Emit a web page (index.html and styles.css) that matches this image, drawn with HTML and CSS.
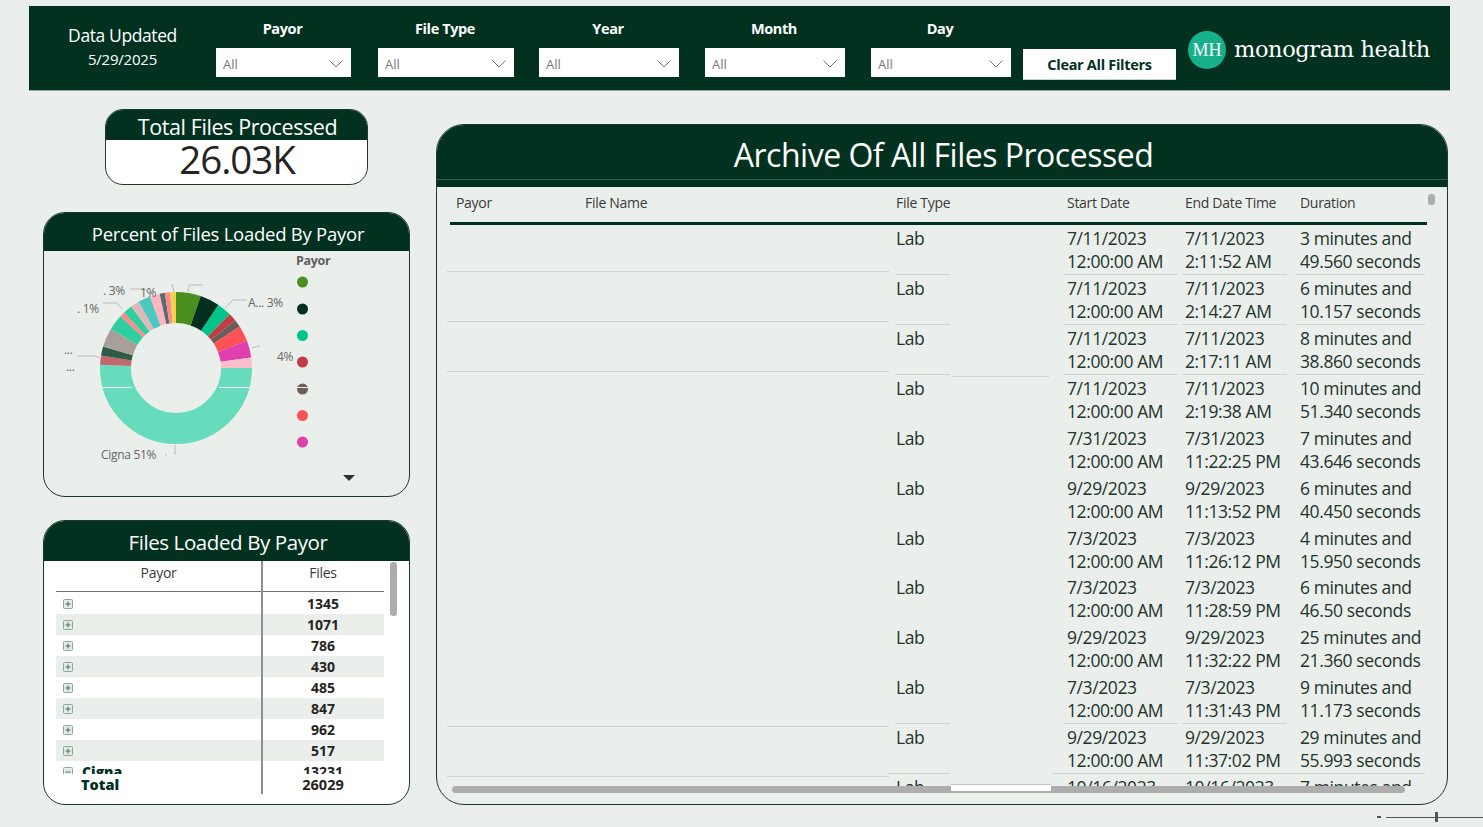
FILE: index.html
```html
<!DOCTYPE html>
<html lang="en">
<head>
<meta charset="UTF-8" />
<meta name="viewport" content="width=device-width, initial-scale=1" />
<title>Archive Of All Files Processed</title>
<link rel="stylesheet" href="styles.css">
</head>
<body>

<svg class="defs" xmlns="http://www.w3.org/2000/svg">
  <symbol id="chev" viewBox="0 0 14 8">
    <polyline points="0.5,0.5 7,7 13.5,0.5" fill="none" stroke="#777" stroke-width="1"/>
  </symbol>
  <symbol id="plus" viewBox="0 0 10 10">
    <rect x="0.5" y="0.5" width="9" height="9" rx="1" fill="#e4ebe7" stroke="#8fa79b"/>
    <path d="M2.5 5h5M5 2.5v5" stroke="#4d6a5c"/>
  </symbol>
  <symbol id="minus" viewBox="0 0 10 10">
    <rect x="0.5" y="0.5" width="9" height="9" rx="1" fill="#e4ebe7" stroke="#8fa79b"/>
    <path d="M2.5 5h5" stroke="#4d6a5c"/>
  </symbol>
</svg>

<!-- Top filter bar -->
<header class="filter-bar">
  <div class="updated">
    <div class="updated-label">Data Updated</div>
    <div class="updated-date">5/29/2025</div>
  </div>
  <div class="slicer slicer-payor">
    <div class="slicer-label">Payor</div>
    <div class="slicer-box">All <svg class="chev"><use href="#chev"/></svg></div>
  </div>
  <div class="slicer slicer-type">
    <div class="slicer-label">File Type</div>
    <div class="slicer-box">All <svg class="chev"><use href="#chev"/></svg></div>
  </div>
  <div class="slicer slicer-wide">
    <div class="slicer-label">Year</div>
    <div class="slicer-box">All <svg class="chev"><use href="#chev"/></svg></div>
  </div>
  <div class="slicer slicer-wide">
    <div class="slicer-label">Month</div>
    <div class="slicer-box">All <svg class="chev"><use href="#chev"/></svg></div>
  </div>
  <div class="slicer slicer-day">
    <div class="slicer-label">Day</div>
    <div class="slicer-box">All <svg class="chev"><use href="#chev"/></svg></div>
  </div>
  <button class="clear-btn">Clear All Filters</button>
  <div class="logo">
    <div class="logo-mark">MH</div>
    <div class="logo-text">monogram health</div>
  </div>
</header>

<main class="dashboard">
  <div class="left-col">

    <section class="card total-card">
      <h2 class="total-title">Total Files Processed</h2>
      <div class="total-value">26.03K</div>
    </section>

    <section class="card pie-card">
      <h2 class="card-title">Percent of Files Loaded By Payor</h2>
      <svg class="pie" viewBox="44 251 365 245" xmlns="http://www.w3.org/2000/svg">
        <g fill="none" stroke-width="31" transform="rotate(-90 176 368)">
          <circle cx="176" cy="368" r="60.5" pathLength="360" stroke="#4a8f1e" stroke-dasharray="19 360"/>
          <circle cx="176" cy="368" r="60.5" pathLength="360" stroke="#04301f" stroke-dasharray="15 360" stroke-dashoffset="-19"/>
          <circle cx="176" cy="368" r="60.5" pathLength="360" stroke="#00c58a" stroke-dasharray="11 360" stroke-dashoffset="-34"/>
          <circle cx="176" cy="368" r="60.5" pathLength="360" stroke="#c23b45" stroke-dasharray="6 360" stroke-dashoffset="-45"/>
          <circle cx="176" cy="368" r="60.5" pathLength="360" stroke="#6b5f58" stroke-dasharray="6 360" stroke-dashoffset="-51"/>
          <circle cx="176" cy="368" r="60.5" pathLength="360" stroke="#ff5257" stroke-dasharray="12 360" stroke-dashoffset="-57"/>
          <circle cx="176" cy="368" r="60.5" pathLength="360" stroke="#e03fad" stroke-dasharray="13 360" stroke-dashoffset="-69"/>
          <circle cx="176" cy="368" r="60.5" pathLength="360" stroke="#ffc0cb" stroke-dasharray="8 360" stroke-dashoffset="-82"/>
          <circle cx="176" cy="368" r="60.5" pathLength="360" stroke="#66dcbc" stroke-dasharray="182.5 360" stroke-dashoffset="-90"/>
          <circle cx="176" cy="368" r="60.5" pathLength="360" stroke="#c0686e" stroke-dasharray="7 360" stroke-dashoffset="-272.5"/>
          <circle cx="176" cy="368" r="60.5" pathLength="360" stroke="#2f5b48" stroke-dasharray="7 360" stroke-dashoffset="-279.5"/>
          <circle cx="176" cy="368" r="60.5" pathLength="360" stroke="#a89f9a" stroke-dasharray="14.5 360" stroke-dashoffset="-286.5"/>
          <circle cx="176" cy="368" r="60.5" pathLength="360" stroke="#2fce9f" stroke-dasharray="12 360" stroke-dashoffset="-301"/>
          <circle cx="176" cy="368" r="60.5" pathLength="360" stroke="#ff8a8a" stroke-dasharray="4 360" stroke-dashoffset="-313"/>
          <circle cx="176" cy="368" r="60.5" pathLength="360" stroke="#2fce9f" stroke-dasharray="7 360" stroke-dashoffset="-317"/>
          <circle cx="176" cy="368" r="60.5" pathLength="360" stroke="#e0b8ba" stroke-dasharray="6.5 360" stroke-dashoffset="-324"/>
          <circle cx="176" cy="368" r="60.5" pathLength="360" stroke="#4dc8c0" stroke-dasharray="9.5 360" stroke-dashoffset="-330.5"/>
          <circle cx="176" cy="368" r="60.5" pathLength="360" stroke="#ffb5c0" stroke-dasharray="7.5 360" stroke-dashoffset="-340"/>
          <circle cx="176" cy="368" r="60.5" pathLength="360" stroke="#5c6b70" stroke-dasharray="4 360" stroke-dashoffset="-347.5"/>
          <circle cx="176" cy="368" r="60.5" pathLength="360" stroke="#ff8a8a" stroke-dasharray="4 360" stroke-dashoffset="-351.5"/>
          <circle cx="176" cy="368" r="60.5" pathLength="360" stroke="#f5d04e" stroke-dasharray="4.5 360" stroke-dashoffset="-355.5"/>
        </g>
        <path d="M102 387.5h30M219 387.5h31" stroke="#fff" stroke-width="1"/>

        <g class="leader">
          <path d="M188 292l1-7h14"/>
          <path d="M225 308l8-8h14"/>
          <path d="M252 348l6-2h2"/>
          <path d="M174 292l-2-8"/>
          <path d="M122 309l-5-6h-14"/>
          <path d="M148 292l-4-3h-14"/>
          <path d="M100 358l-5-2h-17"/>
          <path d="M175 445v10M165 455h2"/>
        </g>
        <g class="pie-label">
          <text x="103" y="295">. 3%</text>
          <text x="140" y="297">1%</text>
          <text x="77" y="313">. 1%</text>
          <text x="248" y="307">A... 3%</text>
          <text x="277" y="361">4%</text>
          <text x="64" y="354">...</text>
          <text x="66" y="371">...</text>
          <text x="101" y="459">Cigna 51%</text>
        </g>

        <text class="legend-title" x="296" y="265">Payor</text>
        <circle cx="302.5" cy="282" r="5.5" fill="#4a8f1e"/>
        <circle cx="302.5" cy="309" r="5.5" fill="#04301f"/>
        <circle cx="302.5" cy="335.5" r="5.5" fill="#00c58a"/>
        <circle cx="302.5" cy="362" r="5.5" fill="#c23b45"/>
        <circle cx="302.5" cy="389" r="5.5" fill="#6b5f58"/>
        <path d="M296 387.5h13" stroke="#ebefec" stroke-width="1"/>
        <circle cx="302.5" cy="415.5" r="5.5" fill="#ff5257"/>
        <circle cx="302.5" cy="442" r="5.5" fill="#e03fad"/>
        <polygon points="343,475 355,475 349,481" fill="#333"/>
      </svg>
    </section>

    <section class="card payor-card">
      <h2 class="card-title">Files Loaded By Payor</h2>
      <div class="payor-body">
        <div class="payor-head">
          <div class="payor-name-col">Payor</div>
          <div class="payor-num-col">Files</div>
        </div>
        <div class="payor-rows">
          <div class="payor-row"><div class="payor-name-col"><svg class="expander"><use href="#plus"/></svg></div><div class="payor-num-col">1345</div></div>
          <div class="payor-row"><div class="payor-name-col"><svg class="expander"><use href="#plus"/></svg></div><div class="payor-num-col">1071</div></div>
          <div class="payor-row"><div class="payor-name-col"><svg class="expander"><use href="#plus"/></svg></div><div class="payor-num-col">786</div></div>
          <div class="payor-row"><div class="payor-name-col"><svg class="expander"><use href="#plus"/></svg></div><div class="payor-num-col">430</div></div>
          <div class="payor-row"><div class="payor-name-col"><svg class="expander"><use href="#plus"/></svg></div><div class="payor-num-col">485</div></div>
          <div class="payor-row"><div class="payor-name-col"><svg class="expander"><use href="#plus"/></svg></div><div class="payor-num-col">847</div></div>
          <div class="payor-row"><div class="payor-name-col"><svg class="expander"><use href="#plus"/></svg></div><div class="payor-num-col">962</div></div>
          <div class="payor-row"><div class="payor-name-col"><svg class="expander"><use href="#plus"/></svg></div><div class="payor-num-col">517</div></div>
          <div class="payor-row payor-open"><div class="payor-name-col"><svg class="expander"><use href="#minus"/></svg><b>Cigna</b></div><div class="payor-num-col">13231</div></div>
        </div>
        <div class="payor-total">
          <div class="payor-name-col"><b>Total</b></div>
          <div class="payor-num-col">26029</div>
        </div>
        <div class="payor-thumb"></div>
      </div>
    </section>
  </div>

  <!-- Archive table -->
  <section class="card archive-card">
    <h1 class="archive-title">Archive Of All Files Processed</h1>
    <div class="archive-body">
      <div class="archive-head">
        <div>Payor</div>
        <div>File Name</div>
        <div>File Type</div>
        <div>Start Date</div>
        <div>End Date Time</div>
        <div>Duration</div>
      </div>
      <div class="archive-rows">
        <div class="arow"><div class="acell"><hr class="rule rule-left"></div><div class="acell">Lab<hr class="rule rule-type"></div><div class="acell">7/11/2023<br>12:00:00 AM<hr class="rule rule-start"></div><div class="acell">7/11/2023<br>2:11:52 AM<hr class="rule rule-end"></div><div class="acell">3 minutes and<br>49.560 seconds<hr class="rule rule-dur"></div></div>
        <div class="arow"><div class="acell"><hr class="rule rule-left"></div><div class="acell">Lab<hr class="rule rule-type"></div><div class="acell">7/11/2023<br>12:00:00 AM<hr class="rule rule-start"></div><div class="acell">7/11/2023<br>2:14:27 AM<hr class="rule rule-end"></div><div class="acell">6 minutes and<br>10.157 seconds<hr class="rule rule-dur"></div></div>
        <div class="arow"><div class="acell"><hr class="rule rule-left"></div><div class="acell">Lab<hr class="rule rule-type-long"></div><div class="acell">7/11/2023<br>12:00:00 AM<hr class="rule rule-start"></div><div class="acell">7/11/2023<br>2:17:11 AM<hr class="rule rule-end"></div><div class="acell">8 minutes and<br>38.860 seconds<hr class="rule rule-dur"></div></div>
        <div class="arow"><div class="acell"></div><div class="acell">Lab</div><div class="acell">7/11/2023<br>12:00:00 AM</div><div class="acell">7/11/2023<br>2:19:38 AM</div><div class="acell">10 minutes and<br>51.340 seconds</div></div>
        <div class="arow"><div class="acell"></div><div class="acell">Lab</div><div class="acell">7/31/2023<br>12:00:00 AM</div><div class="acell">7/31/2023<br>11:22:25 PM</div><div class="acell">7 minutes and<br>43.646 seconds</div></div>
        <div class="arow"><div class="acell"></div><div class="acell">Lab</div><div class="acell">9/29/2023<br>12:00:00 AM</div><div class="acell">9/29/2023<br>11:13:52 PM</div><div class="acell">6 minutes and<br>40.450 seconds</div></div>
        <div class="arow"><div class="acell"></div><div class="acell">Lab</div><div class="acell">7/3/2023<br>12:00:00 AM</div><div class="acell">7/3/2023<br>11:26:12 PM</div><div class="acell">4 minutes and<br>15.950 seconds</div></div>
        <div class="arow"><div class="acell"></div><div class="acell">Lab</div><div class="acell">7/3/2023<br>12:00:00 AM</div><div class="acell">7/3/2023<br>11:28:59 PM</div><div class="acell">6 minutes and<br>46.50 seconds</div></div>
        <div class="arow"><div class="acell"></div><div class="acell">Lab</div><div class="acell">9/29/2023<br>12:00:00 AM</div><div class="acell">9/29/2023<br>11:32:22 PM</div><div class="acell">25 minutes and<br>21.360 seconds</div></div>
        <div class="arow"><div class="acell"><hr class="rule rule-left-low"></div><div class="acell">Lab<hr class="rule rule-type"></div><div class="acell">7/3/2023<br>12:00:00 AM<hr class="rule rule-start"></div><div class="acell">7/3/2023<br>11:31:43 PM<hr class="rule rule-end"></div><div class="acell">9 minutes and<br>11.173 seconds</div></div>
        <div class="arow"><div class="acell"><hr class="rule rule-left-low"></div><div class="acell">Lab<hr class="rule rule-type-wide"></div><div class="acell">9/29/2023<br>12:00:00 AM<hr class="rule rule-start-wide"></div><div class="acell">9/29/2023<br>11:37:02 PM<hr class="rule rule-end-wide"></div><div class="acell">29 minutes and<br>55.993 seconds<hr class="rule rule-dur"></div></div>
        <div class="arow"><div class="acell"></div><div class="acell">Lab</div><div class="acell">10/16/2023</div><div class="acell">10/16/2023</div><div class="acell">7 minutes and</div></div>
      </div>
      <div class="hscroll"></div>
      <div class="hscroll-gap"></div>
      <div class="vscroll"></div>
    </div>
  </section>
</main>

<footer class="zoom-bar">
  <span class="zoom-minus"></span>
  <span class="zoom-track"><span class="zoom-thumb"></span></span>
</footer>

</body>
</html>
```

FILE: styles.css
```css
/* General styling */
* {
  box-sizing: border-box;
}

html, body {
  height: 827px;
  overflow: hidden;
}

body {
  margin: 0;
  padding: 6px 33px 0 29px;
  background: #ebefec;
  color: #22342b;
  font-family: "Open Sans", "Noto Sans", sans-serif;
}

.defs {
  display: none;
}

/* Filter bar */
.filter-bar {
  display: flex;
  align-items: flex-start;
  height: 85px;
  background: #02311f;
  border-bottom: 1px solid #9aa8a1;
  color: #fff;
}

.updated {
  width: 187px;
  padding-top: 18px;
  text-align: center;
}

.updated-label {
  font-size: 17.5px;
  letter-spacing: -0.4px;
  line-height: 22px;
}

.updated-date {
  margin-top: 3px;
  font-size: 15px;
  letter-spacing: -0.2px;
  line-height: 20px;
}

.slicer {
  padding-top: 13px;
}

.slicer-payor { width: 135px; margin-right: 27px; }
.slicer-type { width: 136px; margin-right: 25px; }
.slicer-wide { width: 140px; margin-right: 26px; }
.slicer-day { width: 140px; margin-right: 12px; }

.slicer-label {
  height: 29px;
  padding-right: 2px;
  font-size: 14.5px;
  font-weight: 700;
  letter-spacing: -0.4px;
  line-height: 20px;
  text-align: center;
}

.slicer-box {
  display: flex;
  align-items: flex-end;
  justify-content: space-between;
  height: 29px;
  padding: 0 8px 4px 7px;
  background: #fff;
  color: #777;
  font-size: 13px;
  line-height: 18px;
}

.chev {
  width: 14px;
  height: 8px;
  margin-bottom: 5px;
}

.clear-btn {
  width: 153px;
  height: 31px;
  margin-top: 43px;
  padding: 0;
  background: #fff;
  border: none;
  border-bottom: 1px solid #c9cfcc;
  color: #02311f;
  font-family: inherit;
  font-size: 14.5px;
  font-weight: 700;
  letter-spacing: -0.3px;
}

.logo {
  display: flex;
  align-items: center;
  margin: 25px 0 0 12px;
}

.logo-mark {
  width: 38px;
  height: 38px;
  border-radius: 50%;
  background: #16b18a;
  color: #fff;
  font-family: "Liberation Serif", serif;
  font-size: 18px;
  line-height: 38px;
  text-align: center;
}

.logo-text {
  margin: -3px 0 0 8px;
  font-family: "DejaVu Serif", serif;
  font-size: 22.5px;
  letter-spacing: -0.4px;
  white-space: nowrap;
}

/* Cards */
.dashboard {
  display: flex;
  align-items: flex-start;
  margin-top: 18px;
}

.left-col {
  display: flex;
  flex-direction: column;
  width: 367px;
  margin: 0 26px 0 14px;
}

.card {
  overflow: hidden;
  border: 1px solid #1c3a2c;
}

.card-title,
.total-title,
.archive-title {
  margin: 0;
  background: #02311f;
  color: #fff;
  font-weight: 400;
  text-align: center;
}

.card-title {
  height: 38px;
  padding-left: 3px;
  font-size: 18.5px;
  letter-spacing: -0.25px;
  line-height: 41px;
}

.total-card {
  width: 263px;
  height: 76px;
  margin-left: 62px;
  border-radius: 18px;
  background: #fff;
}

.total-title {
  height: 30px;
  padding: 3px 0 0 2px;
  font-size: 21.5px;
  letter-spacing: -0.4px;
  line-height: 27px;
}

.total-value {
  padding-left: 1px;
  color: #252423;
  font-size: 38.5px;
  letter-spacing: -1px;
  line-height: 38px;
  text-align: center;
}

.pie-card {
  height: 285px;
  margin-top: 27px;
  border-radius: 22px;
}

.pie {
  display: block;
  width: 365px;
  height: 245px;
}

.pie-label {
  fill: #666;
  font-size: 12px;
  letter-spacing: -0.3px;
}

.leader {
  fill: none;
  stroke: #bbb;
}

.legend-title {
  fill: #605e5c;
  font-size: 12.5px;
  font-weight: 700;
  letter-spacing: -0.3px;
}

.payor-card {
  height: 285px;
  margin-top: 23px;
  border-radius: 22px;
  background: #fff;
}

.payor-card .card-title {
  height: 40px;
  padding-left: 3px;
  font-size: 20.5px;
  letter-spacing: -0.4px;
  line-height: 43px;
}

.payor-body {
  position: relative;
  height: 233px;
  padding: 0 25px 0 12px;
}

/* column divider runs over the striped rows */
.payor-body::after {
  content: "";
  position: absolute;
  top: 0;
  bottom: 0;
  left: 217px;
  width: 1.5px;
  background: #8f8f8f;
}

.payor-head {
  display: flex;
  height: 31px;
  border-bottom: 1px solid #6e6e6e;
  color: #3a3a3a;
  font-size: 14px;
  letter-spacing: -0.3px;
  line-height: 24px;
  text-align: center;
}

.payor-head .payor-name-col {
  align-items: flex-start;
}

.payor-name-col {
  display: flex;
  align-items: center;
  justify-content: center;
  width: 206px;
  padding-right: 1px;
}

.payor-num-col {
  width: 122px;
  text-align: center;
}

.payor-rows {
  height: 182px;
  padding-top: 1px;
  overflow: hidden;
}

.payor-row {
  display: flex;
  height: 21px;
  color: #252423;
  font-size: 14px;
  font-weight: 700;
  line-height: 22px;
}

.payor-row:nth-child(even) {
  background: #ebefec;
}

.payor-row .payor-name-col {
  justify-content: flex-start;
  padding-left: 7px;
}

.payor-open b {
  margin-left: 9px;
  color: #02311f;
}

.expander {
  width: 10px;
  height: 10px;
  flex: none;
}

.payor-total {
  display: flex;
  color: #252423;
  font-size: 14.5px;
  font-weight: 700;
  line-height: 22px;
}

.payor-total .payor-name-col {
  justify-content: flex-start;
  padding-left: 25px;
  color: #02311f;
}

.payor-thumb {
  position: absolute;
  top: 1px;
  left: 346px;
  width: 7px;
  height: 54px;
  border-radius: 3px;
  background: #adadad;
}

/* Archive table */
.archive-card {
  flex: none;
  width: 1012px;
  height: 681px;
  margin-top: 15px;
  border-radius: 28px;
}

.archive-title {
  height: 62px;
  padding-left: 3px;
  box-shadow: inset 0 -7px 0 #02311f, inset 0 -8px 0 #3a5a4b;
  font-size: 32px;
  letter-spacing: -0.5px;
  line-height: 60px;
}

.archive-body {
  position: relative;
  height: 618px;
  padding: 0 20px 0 13px;
}

.archive-head {
  display: grid;
  grid-template-columns: 129px 311px 171px 118px 115px 133px;
  height: 38px;
  padding-left: 6px;
  border-bottom: 3px solid #02311f;
  color: #3a3a3a;
  font-size: 14px;
  letter-spacing: -0.3px;
  line-height: 32px;
}

.archive-rows {
  height: 561px;
  margin-left: -3px;
  overflow: hidden;
}

.arow {
  display: grid;
  grid-template-columns: 449px 171px 118px 115px 130px;
  height: 49.93px;
  font-size: 17.5px;
  letter-spacing: -0.4px;
  line-height: 23px;
}

.acell {
  display: flex;
  flex-direction: column;
  padding-top: 2px;
}

.acell br {
  display: block;
}

.rule,
.rule-left-low,
.rule-type-long,
.rule-type-wide,
.rule-start-wide,
.rule-end-wide {
  flex: none;
  align-self: flex-start;
  height: 1px;
  margin: auto 0 0;
  border: none;
  background: #cfd3d0;
}

.rule-left { width: 442px; margin-bottom: 3px; }
.rule-left-low { width: 442px; margin-bottom: -3px; }
.rule-type { width: 54px; }
.rule-start { width: 114px; margin-left: -3px; }
.rule-end { width: 104px; margin-left: -2px; }
.rule-dur { width: 129px; margin-left: -4px; }

/* second piece of this rule sits a little lower, past the first column edge */
.rule-type-long {
  width: 153px;
  height: 3px;
  margin-bottom: -2px;
  background:
    linear-gradient(#cfd3d0, #cfd3d0) 0 0 / 54px 1px no-repeat,
    linear-gradient(#cfd3d0, #cfd3d0) 56px 2px / 97px 1px no-repeat;
}

.rule-type-wide { width: 62px; margin-left: -8px; }
.rule-start-wide { width: 133px; margin-left: -15px; }
.rule-end-wide { width: 115px; }

.hscroll {
  position: absolute;
  left: 15px;
  right: 42px;
  top: 599px;
  height: 7px;
  border-radius: 4px;
  background: #adadad;
}

.hscroll-gap {
  position: absolute;
  left: 514px;
  top: 597px;
  width: 100px;
  height: 7px;
  border-top: 1px solid #c4c4c4;
  background: #fff;
}

.vscroll {
  position: absolute;
  top: 7px;
  left: 991px;
  width: 7px;
  height: 11px;
  border-radius: 3px;
  background: #adadad;
}

/* Report zoom slider */
.zoom-bar {
  display: flex;
  align-items: center;
  justify-content: flex-end;
  height: 10px;
  margin: 7px -33px 0 0;
}

.zoom-minus {
  width: 4px;
  height: 2px;
  margin-right: 5px;
  background: #555;
}

.zoom-track {
  display: flex;
  justify-content: center;
  width: 97px;
  height: 1px;
  background: #555;
}

.zoom-thumb {
  width: 3px;
  height: 10px;
  margin: -5px 0 0 4px;
  background: #555;
}
```
